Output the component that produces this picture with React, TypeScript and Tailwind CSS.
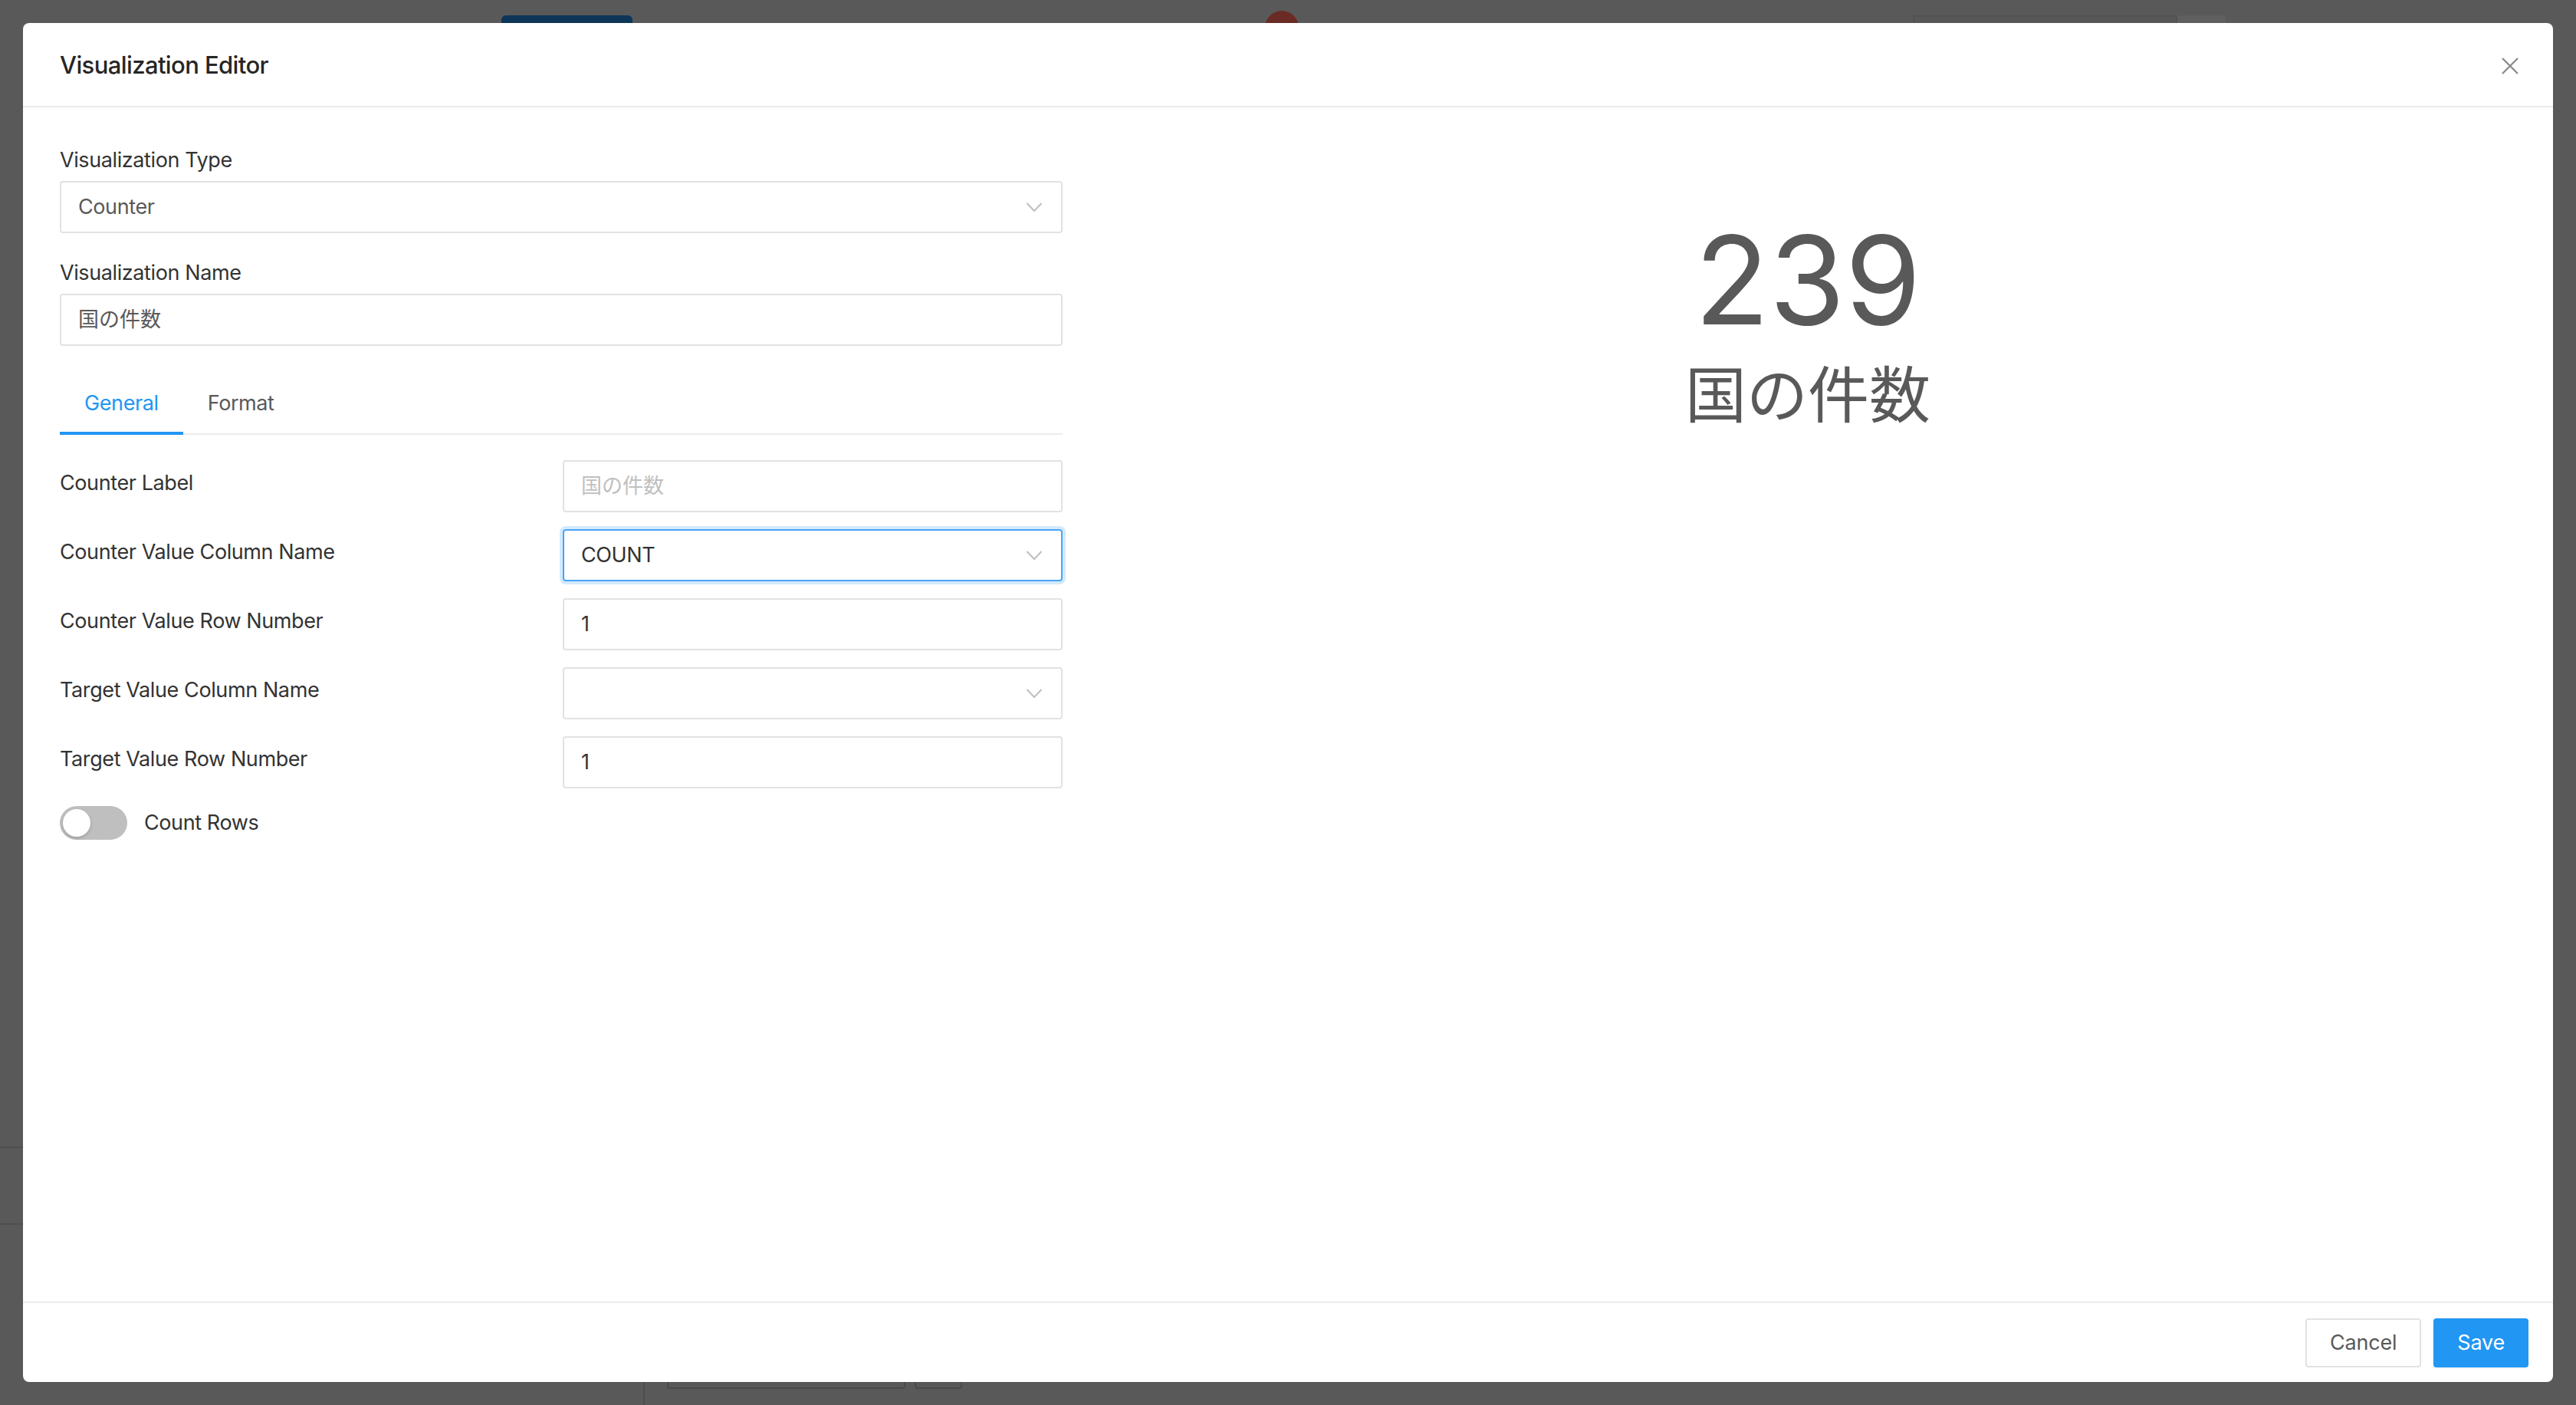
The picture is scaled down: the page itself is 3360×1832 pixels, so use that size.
import React from "react";

const FONT = { fontFamily: "Inter, 'Noto Sans CJK JP', sans-serif" };

const Chevron = () => (
  <svg width="22" height="14" viewBox="0 0 22 14" fill="none">
    <path d="M1.5 2 L11 12 L20.5 2" stroke="#bfbfbf" strokeWidth="2" />
  </svg>
);

const CloseIcon = () => (
  <svg width="24" height="24" viewBox="0 0 24 24" fill="none">
    <path d="M2 2 L22 22 M22 2 L2 22" stroke="#8c8c8c" strokeWidth="2.4" />
  </svg>
);

function Row({ label, children }: { label: string; children: React.ReactNode }) {
  return (
    <div className="flex items-start">
      <div className="w-[656px] h-[68px] flex items-center pb-[8px] text-[27px] tracking-[-0.4px] text-[#333333]">{label}</div>
      <div className="flex-1">{children}</div>
    </div>
  );
}

export default function App() {
  return (
    <div className="relative w-[3360px] h-[1832px] overflow-hidden bg-[#595959]" style={FONT}>
      {/* faint page underneath the overlay */}
      <div className="absolute left-[654px] top-[20px] w-[171px] h-[24px] rounded-[6px] bg-[#0c3557]" />
      <div className="absolute left-[1650px] top-[14px] w-[44px] h-[44px] rounded-full bg-[#6a2b24]" />
      <div className="absolute left-[2495px] top-[20px] w-[345px] h-[24px] border-2 border-[#525252] bg-[#575757]" />
      <div className="absolute left-[2840px] top-[20px] w-[63px] h-[24px] rounded-r-[4px] bg-[#5f5f5f]" />
      <div className="absolute left-0 top-[1495px] w-[30px] h-[2px] bg-[#4f4f4f]" />
      <div className="absolute left-0 top-[1595px] w-[30px] h-[2px] bg-[#4f4f4f]" />
      <div className="absolute left-[839px] top-[1790px] w-[2px] h-[42px] bg-[#4e4e4e]" />
      <div className="absolute left-[870px] top-[1780px] w-[311px] h-[31px] rounded-[4px] border-2 border-[#4a4a4a]" />
      <div className="absolute left-[1193px] top-[1780px] w-[62px] h-[31px] rounded-[4px] border-2 border-[#4a4a4a]" />

      {/* modal */}
      <div className="absolute left-[30px] top-[30px] w-[3300px] h-[1772px] bg-white rounded-[8px] flex flex-col">
        <div className="relative h-[110px] shrink-0 border-b-2 border-[#ececec] px-[48px] flex items-center">
          <div className="text-[31px] tracking-[-0.6px] font-medium text-[#262626] pt-[3px]">Visualization Editor</div>
          <div className="absolute right-0 top-0 w-[112px] h-[110px] flex items-center justify-center pt-[2px]">
            <CloseIcon />
          </div>
        </div>

        <div className="flex-1 flex px-[48px] pt-[48px]">
          {/* left editor */}
          <div className="w-[1308px] shrink-0 flex flex-col">
            <div className="h-[42px] text-[27px] tracking-[-0.4px] leading-[42px] text-[#333333]">Visualization Type</div>
            <div className="mt-[6px] h-[68px] border-2 border-[#e2e2e2] rounded-[4px] flex items-center justify-between pl-[22px] pr-[24px] text-[27px] tracking-[-0.4px] text-[#595959]">
              <span>Counter</span>
              <Chevron />
            </div>
            <div className="mt-[31px] h-[42px] text-[27px] tracking-[-0.4px] leading-[42px] text-[#333333]">Visualization Name</div>
            <div className="mt-[6px] h-[68px] border-2 border-[#e2e2e2] rounded-[4px] flex items-center pl-[22px] text-[27px] text-[#595959]">
              国の件数
            </div>

            <div className="mt-[26px] flex border-b-2 border-[#ececec] h-[90px]">
              <div className="relative px-[32px] pt-[28px] text-[27px] tracking-[-0.4px] leading-[42px] text-[#2196f3]">
                General
                <div className="absolute left-0 right-0 bottom-[-2px] h-[4px] bg-[#2196f3]" />
              </div>
              <div className="px-[32px] pt-[28px] text-[27px] tracking-[-0.4px] leading-[42px] text-[#595959]">Format</div>
            </div>

            <div className="mt-[33px] flex flex-col gap-[22px]">
              <Row label="Counter Label">
                <div className="h-[68px] border-2 border-[#e2e2e2] rounded-[4px] flex items-center pl-[22px] text-[27px] text-[#bfbfbf]">
                  国の件数
                </div>
              </Row>
              <Row label="Counter Value Column Name">
                <div className="h-[68px] border-2 border-[#4aa3f5] rounded-[4px] shadow-[0_0_0_4px_rgba(33,150,243,0.2)] flex items-center justify-between pl-[22px] pr-[24px] text-[27px] tracking-[-0.4px] text-[#333333]">
                  <span>COUNT</span>
                  <Chevron />
                </div>
              </Row>
              <Row label="Counter Value Row Number">
                <div className="h-[68px] border-2 border-[#e2e2e2] rounded-[4px] flex items-center pl-[22px] text-[27px] text-[#333333]">
                  1
                </div>
              </Row>
              <Row label="Target Value Column Name">
                <div className="h-[68px] border-2 border-[#e2e2e2] rounded-[4px] flex items-center justify-end pr-[24px]">
                  <Chevron />
                </div>
              </Row>
              <Row label="Target Value Row Number">
                <div className="h-[68px] border-2 border-[#e2e2e2] rounded-[4px] flex items-center pl-[22px] text-[27px] text-[#333333]">
                  1
                </div>
              </Row>
            </div>

            <div className="mt-[23px] flex items-center gap-[22px]">
              <div className="relative w-[88px] h-[44px] rounded-full bg-[#bfbfbf]">
                <div className="absolute left-[4px] top-[4px] w-[36px] h-[36px] rounded-full bg-white shadow-[0_2px_4px_rgba(0,35,11,0.2)]" />
              </div>
              <span className="text-[27px] tracking-[-0.4px] text-[#333333]">Count Rows</span>
            </div>
          </div>

          {/* preview */}
          <div className="flex-1 ml-[48px] flex flex-col items-center pt-[97px] text-[#595959]">
            <div className="text-[160px] leading-[160px]" style={{ fontFamily: "Inter, sans-serif" }}>
              239
            </div>
            <div className="mt-[24px] text-[80px] leading-[80px]" style={{ fontFamily: "'Noto Sans CJK JP', sans-serif" }}>
              国の件数
            </div>
          </div>
        </div>

        <div className="h-[105px] shrink-0 border-t-2 border-[#ececec] flex items-start justify-end gap-[16px] pt-[20px] pr-[32px]">
          <div className="h-[64px] px-[30px] border-2 border-[#e2e2e2] rounded-[4px] flex items-center text-[27px] tracking-[-0.2px] text-[#595959]">
            Cancel
          </div>
          <div className="h-[64px] px-[31px] rounded-[4px] bg-[#2196f3] flex items-center text-[27px] tracking-[-0.2px] text-white shadow-[0_2px_0_rgba(0,0,0,0.045)]">
            Save
          </div>
        </div>
      </div>
    </div>
  );
}
